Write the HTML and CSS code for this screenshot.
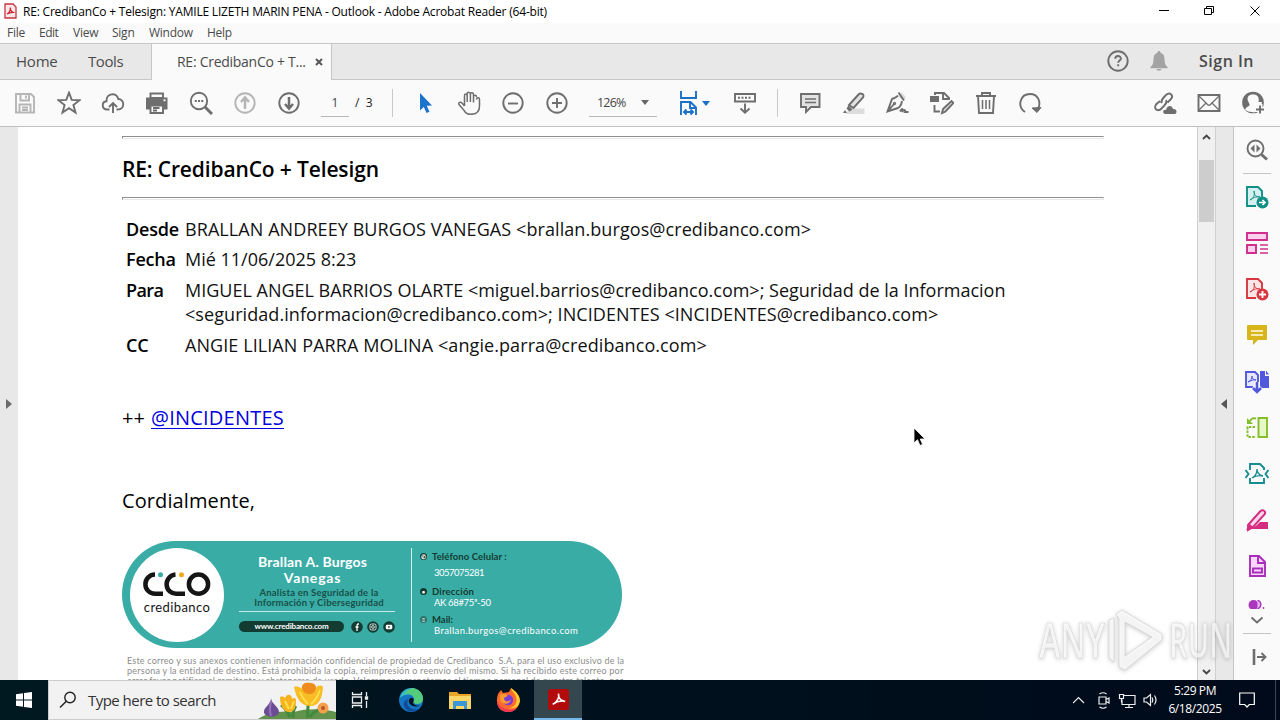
FILE: index.html
```html
<!DOCTYPE html>
<html lang="en">
<head>
    <meta charset="UTF-8">
    <title>RE: CredibanCo + Telesign - Adobe Acrobat Reader</title>
    <link rel="stylesheet" href="styles.css">
</head>
<body>
<div class="screen">

    <header class="titlebar">
        <svg class="app-icon" width="13" height="16" viewBox="0 0 13 16"><path d="M1 1h8l3 3v11H1z" fill="#fde9e9" stroke="#c8353f" stroke-width="1.3"/><path d="M3 11c2-1 3.500-4 3.300-6.500C6.500 8 8 9.500 10.500 9.500 7.500 9 5 9.800 3 11z" fill="none" stroke="#c8252f" stroke-width="1.200"/></svg>
        <span class="title-text">RE: CredibanCo + Telesign: YAMILE LIZETH MARIN PENA - Outlook - Adobe Acrobat Reader (64-bit)</span>
        <svg class="win-buttons" width="110" height="20" viewBox="0 0 110 20"><path d="M5 8.500h10M50.500 6.500h7v6h-7zM52.500 6.500v-2h7v6h-2M96.500 4.500l9 9M105.500 4.500l-9 9"/></svg>
    </header>

    <nav class="menubar">
        <span class="m-file">File</span>
        <span class="m-edit">Edit</span>
        <span class="m-view">View</span>
        <span class="m-sign">Sign</span>
        <span class="m-window">Window</span>
        <span class="m-help">Help</span>
    </nav>

    <div class="tabs">
        <div class="tab-home"><span>Home</span></div>
        <div class="tab-tools"><span>Tools</span></div>
        <div class="tab-doc"><span>RE: CredibanCo + T...</span>
            <svg width="8" height="8" viewBox="0 0 8 8"><path d="M1 1l6 6M7 1L1 7" stroke="#555" stroke-width="1.900"/></svg>
        </div>
        <div class="tab-right">
            <svg class="ic" width="24" height="24" viewBox="0 0 24 24"><circle cx="12" cy="12" r="9.700"/><path d="M9.300 9.800c0-3.600 5.600-3.600 5.600-.3 0 2-2.700 2-2.700 4.300M12.200 15.300v2"/></svg>
            <svg class="bell" width="18" height="20" viewBox="0 0 18 20"><path d="M9 0c1 0 1.500.7 1.500 1.700C13.500 2.500 14.500 5 14.500 8c0 4.500 1 6.500 3 8v1.300H.5V16c2-1.500 3-3.500 3-8 0-3 1-5.500 4-6.300C7.500.7 8 0 9 0zM6.500 18h5c-.3 2.300-4.700 2.300-5 0z"/></svg>
            <span class="signin">Sign In</span>
        </div>
    </div>

    <div class="toolbar">
        <div class="btn"><svg class="ic pale" width="24" height="24" viewBox="0 0 24 24"><path d="M3 3h15l3 3v15.500H3zM7.500 3v6.500h8.500V3M13 4.500v3M6.500 21v-7.500h11V21M9 16.500h6M9 19h6"/></svg></div>
        <div class="btn"><svg class="ic" width="24" height="24" viewBox="0 0 24 24"><path d="M12 1.700l2.700 7.200 7.800.3-6.100 4.800 2.100 7.500-6.500-4.300-6.500 4.300 2.100-7.500L1.500 9.200l7.800-.3z"/></svg></div>
        <div class="btn"><svg class="ic" width="24" height="24" viewBox="0 0 24 24"><path d="M8.500 18.500H6.300c-5.800 0-6-7.600-.8-8.200C5 2 15.500.8 17.300 8c6.500 0 6.800 10.500-.5 10.500h-1.300M12 22v-9.500M8 16l4-4 4 4"/></svg></div>
        <div class="btn"><svg class="ic" width="24" height="24" viewBox="0 0 24 24"><path d="M5.500 2.500h12.500V7H5.500z"/><path d="M1 6.500h21.500v12h-4v-3H5v3H1z" fill="#6e6e6e" stroke="none"/><path d="M5.500 14.500H18V22H5.500zM8 17h6.500M8 19.500h4" fill="#fafafa"/><path d="M18.500 9.300h2" stroke="#fafafa"/></svg></div>
        <div class="btn"><svg class="ic" width="24" height="24" viewBox="0 0 24 24"><circle cx="10" cy="10" r="8.200"/><path d="M16 16l7 7" stroke-width="3"/><path d="M5.800 10h2M9 10h2M12.200 10h2" stroke-width="2.200"/></svg></div>
        <div class="btn"><svg class="ic pale" width="24" height="24" viewBox="0 0 24 24"><circle cx="12" cy="12" r="9.700"/><path d="M12 18V8M8 11l4-4.500 4 4.500" stroke-width="2.500"/></svg></div>
        <div class="btn"><svg class="ic" width="24" height="24" viewBox="0 0 24 24"><circle cx="12" cy="12" r="9.700"/><path d="M12 6v10M8 13l4 4.500 4-4.500" stroke-width="2.500"/></svg></div>
        <div class="page-box"><span class="page-no">1</span><span class="page-total">/&nbsp; 3</span></div>
        <div class="sep"></div>
        <div class="btn pointer"><svg width="16" height="22" viewBox="0 0 16 22"><path d="M3 1l12 12.500-5.200.3 2.700 6-3 1.200-2.700-6L3 18.500z" fill="#1c74cc"/></svg></div>
        <div class="btn"><svg class="ic thin" width="24" height="24" viewBox="0 0 24 24"><path d="M7.500 15V4.800c0-2.300 2.700-2.300 2.700 0V11M10.200 11V3c0-2.400 3.200-2.400 3.200 0v8M13.400 11V3.500c0-2.300 3.100-2.300 3.100 0V11.500M16.500 11.500V6c0-2.300 3-2.300 3 0M19.500 8.500c0-2.300 3-2.300 3 0V15c0 5-3 8.300-8.500 8.300-4 0-5.500-1-7-4L2 13.500c-1-2.300 1.500-3 3-1.500l2.500 3"/></svg></div>
        <div class="btn"><svg class="ic" width="24" height="24" viewBox="0 0 24 24"><circle cx="12" cy="12" r="9.700"/><path d="M7 12.500h10"/></svg></div>
        <div class="btn"><svg class="ic" width="24" height="24" viewBox="0 0 24 24"><circle cx="12" cy="12" r="9.700"/><path d="M7 12h10M12 7v10"/></svg></div>
        <div class="zoom-box"><span class="zoom-val">126%</span><i class="caret"></i></div>
        <div class="fit"><svg class="ic blue" width="20" height="26" viewBox="0 0 20 26"><path d="M3 1v7h15V1M3 25V12h9.500l5.500 5.500V25M12 12v6h6M6 22h9M8.500 19.500L6 22l2.500 2.500M12.500 19.500L15 22l-2.500 2.500"/></svg><i class="caret blue"></i></div>
        <div class="btn"><svg class="ic" width="24" height="24" viewBox="0 0 24 24"><path d="M2 3h20v7.500H2z"/><path d="M5 6.800h14" stroke-dasharray="2 1.500"/><path d="M12 12.500v9M7.500 17.500l4.500 4.300 4.500-4.300"/></svg></div>
        <div class="sep second"></div>
        <div class="btn"><svg class="ic" width="24" height="24" viewBox="0 0 24 24"><path d="M3 3h18.500v13H13l-5 5v-5H3z" fill="#e2e2e2"/><path d="M7 8h11M7 11.500h11" stroke-width="1.500"/></svg></div>
        <div class="btn"><svg class="ic" width="24" height="24" viewBox="0 0 24 24"><path d="M7 17.500h15.500V23H4z" fill="#dcdcdc" stroke="none"/><path d="M7 14L16.500 3.500c2-2 6.500-.5 4.500 3L11.500 17z" fill="#e2e2e2"/><path d="M6.500 14.500l4 4-3 2-3-3zM3 19l2 3H1z" fill="#6e6e6e" stroke="none"/></svg></div>
        <div class="btn"><svg class="ic" width="24" height="24" viewBox="0 0 24 24"><path d="M15 1l5 5-3 4-4-4z" fill="#ddd" stroke="none"/><path d="M12.500 1.500l5.500 8M12 4.500c-1 1.500-3 2.500-6 3.500L1.500 20.500 12 17c2-1 3.500-4 4-7M2 20l6-7M14 20.500c3-5 3-1 2 .5 3-4 3.500-1 3 0h3.500" stroke-width="1.900"/><circle cx="8.500" cy="12.500" r="1" stroke-width="1.300"/></svg></div>
        <div class="btn"><svg class="ic" width="24" height="24" viewBox="0 0 24 24"><path d="M5 4V2h9l5 5v2M13 2v6h6M4.500 14v6.500H10"/><path d="M0 5h9v6H0z" fill="#6e6e6e" stroke="none"/><path d="M12 22l1-4 8.500-8 2 2-8 8.500z" fill="#ddd"/></svg></div>
        <div class="btn"><svg class="ic" width="24" height="24" viewBox="0 0 24 24"><path d="M2 5h20M8 5V2h8v3M4 5l1 17h14l1-17"/><path d="M8.500 9v9M12 9v9M15.500 9v9" stroke-width="1.500"/></svg></div>
        <div class="btn"><svg class="ic" width="24" height="24" viewBox="0 0 24 24"><path d="M7 21C-1.500 15 2.500 3 12 3c8 0 11.500 8 8 15"/><path d="M14 17l9-.5-4 5z" fill="#6e6e6e" stroke-width="1"/></svg></div>
        <div class="toolbar-right">
            <div class="btn"><svg class="ic" width="26" height="24" viewBox="0 0 26 24"><path d="M10 12c-1.500-2 0-4 4-8 4-3.500 8 .5 5 4l-3.500 3.500M14 9c1.500 2 0 4-4 8-4 4.500-9 1-6-3.500L8 10"/><path d="M13 23c-3-1-2-5 1-4 1-5 6-5 7-1 4-1 5 5 1 5z" fill="#6e6e6e" stroke="none"/></svg></div>
            <div class="btn"><svg class="ic" width="24" height="24" viewBox="0 0 24 24"><path d="M1.500 4h21v16h-21z"/><path d="M2 5l8.500 8.500c1 1 2 1 3 0L22 5M2 19l7-7M22 19l-7-7" stroke-width="1.300"/></svg></div>
            <div class="btn"><svg class="ic" width="24" height="24" viewBox="0 0 24 24"><circle cx="12" cy="11.500" r="9.900"/><path d="M4 18.500c1-2.800 5-2.300 5-4.500 0-1.500-2-2.500-2.300-4.500C6 5.500 8.500 3.500 12 3.500s6 2 5.300 6C17 11.500 15 12.500 15 14l-1 7.500-7-1z" fill="#fafafa" stroke="none"/><path d="M2.300 10c0-5 4-8.500 9.700-8.500 3 0 6 1 7.500 3.500 1.500 2 2 4 2 6h-4c1-5-1-7.500-5.500-7.500S5.700 6 7 10c1 2.500 2 3 1.500 4.500L4 17.500c-1.500-2-1.700-4.500-1.700-7.500z" fill="#6e6e6e" stroke="none"/><path d="M19 13v10.500M14 18.500h10" stroke="#fafafa" stroke-width="5"/><path d="M19 14.500v8M15 18.500h8"/></svg></div>
        </div>
    </div>

    <main class="main">
        <div class="left-rail"><i></i></div>

        <article class="doc">
            <div class="rule"></div>
            <h1><span>RE: CredibanCo + Telesign</span></h1>
            <div class="rule"></div>
            <div class="mail-head">
                <b class="k1">Desde</b><p class="v1">BRALLAN ANDREEY BURGOS VANEGAS &lt;brallan.burgos@credibanco.com&gt;</p>
                <b class="k2">Fecha</b><p class="v2">Mié 11/06/2025 8:23</p>
                <b class="k3">Para</b><p class="v3"><span class="v3a">MIGUEL ANGEL BARRIOS OLARTE &lt;miguel.barrios@credibanco.com&gt;; Seguridad de la Informacion</span><br><span class="v3b">&lt;seguridad.informacion@credibanco.com&gt;; INCIDENTES &lt;INCIDENTES@credibanco.com&gt;</span></p>
                <b class="k4">CC</b><p class="v4">ANGIE LILIAN PARRA MOLINA &lt;angie.parra@credibanco.com&gt;</p>
            </div>
            <p class="mention"><span class="plus">++</span><a href="#">@INCIDENTES</a></p>
            <p class="closing">Cordialmente,</p>

            <section class="card">
                <div class="card-logo">
                    <svg width="70" height="30" viewBox="0 0 70 30" fill="none" stroke="#151515" stroke-width="4.500"><path d="M13 4.600A9.600 9.600 0 0 0 13 23.800h8M33.500 4.600a9.600 9.600 0 0 0 1.500 19.200h8"/><circle cx="56.500" cy="14.200" r="9.600"/><circle cx="18.500" cy="4.700" r="2.500" fill="#3aaca6" stroke="none"/><circle cx="39.500" cy="4.700" r="2.500" fill="#f2a81d" stroke="none"/></svg>
                    <span class="brand">credibanco</span>
                </div>
                <div class="card-mid">
                    <span class="n1">Brallan A. Burgos</span>
                    <span class="n2">Vanegas</span>
                    <span class="r1">Analista en Seguridad de la</span>
                    <span class="r2">Información y Ciberseguridad</span>
                    <div class="web-row">
                        <div class="pill"><span class="web">www.credibanco.com</span></div>
                        <svg width="44" height="12" viewBox="0 0 44 12"><g fill="#123c31"><circle cx="6" cy="6" r="5.800"/><circle cx="22" cy="6" r="5.800"/><circle cx="38" cy="6" r="5.800"/></g><path d="M8 3H7C6 3 6 4 6 5v5M4.500 6h3" stroke="#fff" fill="none" stroke-width="1.300"/><rect x="19" y="3" width="6" height="6" rx="1.500" fill="none" stroke="#fff" stroke-width=".8"/><circle cx="22" cy="6" r="1.400" fill="none" stroke="#fff" stroke-width=".8"/><rect x="34.800" y="3.700" width="6.500" height="4.600" rx="1.200" fill="#fff"/><path d="M37.300 4.800v2.400l2-1.200z" fill="#123c31"/></svg>
                    </div>
                </div>
                <div class="card-info">
                    <div class="row lab"><i class="dot">✆</i><span class="c1">Teléfono Celular :</span></div>
                    <div class="row val v-a"><span class="c2">3057075281</span></div>
                    <div class="row lab l-b"><i class="dot">•</i><span class="c3">Dirección</span></div>
                    <div class="row val v-b"><span class="c4">AK 68#75ª-50</span></div>
                    <div class="row lab l-c"><i class="dot soft">≡</i><span class="c5">Mail:</span></div>
                    <div class="row val v-c"><span class="c6">Brallan.burgos@credibanco.com</span></div>
                </div>
            </section>
            <div class="legal">
                <span class="g1">Este correo y sus anexos contienen información confidencial de propiedad de Credibanco&nbsp; S.A. para el uso exclusivo de la</span>
                <span class="g2">persona y la entidad de destino. Está prohibida la copia, reimpresión o reenvío del mismo. Si ha recibido este correo por</span>
                <span class="g3">error favor notificar al remitente y abstenerse de usarlo. Valoramos y respetamos el tiempo personal de nuestro talento, por</span>
            </div>
        </article>

        <div class="scroll">
            <svg width="9" height="6" viewBox="0 0 9 6"><path d="M1 5l3.500-3.500L8 5"/></svg>
            <div class="thumb"></div>
            <svg class="down" width="9" height="6" viewBox="0 0 9 6"><path d="M1 1l3.500 3.500L8 1"/></svg>
        </div>
        <div class="right-rail"><i></i></div>

        <aside class="tools">
            <div class="tool"><svg class="ic" width="24" height="24" viewBox="0 0 24 24"><circle cx="10.500" cy="10.500" r="8"/><path d="M16.500 16.500l5.500 5" stroke-width="3"/><path d="M9.500 6.500v8l-4-4zM11.500 6.500v8l4-4z" fill="#6e6e6e" stroke="none"/></svg></div>
            <div class="line"></div>
            <div class="tool"><svg class="ic teal" width="24" height="24" viewBox="0 0 24 24"><path d="M11 21H2V2h11l4 4v6" fill="#d5f0f0"/><path d="M5 15c4-2 5-5 4-9 0 4 2 6 6 6-4-1-7 1-10 3z" stroke-width="1"/><circle cx="17.500" cy="17.500" r="6" fill="#148f86" stroke="none"/><path d="M14 17.500h6M17.500 15l2.500 2.500-2.500 2.500" stroke="#fff" stroke-width="1.600"/></svg></div>
            <div class="tool"><svg class="ic magenta" width="24" height="24" viewBox="0 0 24 24"><path d="M2 2h20v7H2zM2 14h9v8H2z" fill="#fbd0ec"/><path d="M15 14h8M15 18h8M15 22h8" stroke-width="1.300"/></svg></div>
            <div class="tool"><svg class="ic red" width="24" height="24" viewBox="0 0 24 24"><path d="M11 21H2V2h11l4 4v6" fill="#ffe6e6"/><path d="M5 15c4-2 5-5 4-9 0 4 2 6 6 6-4-1-7 1-10 3z" stroke-width="1"/><circle cx="17.500" cy="17.500" r="6" fill="#d7373f" stroke="none"/><path d="M14 17.500h7M17.500 14v7" stroke="#fff"/></svg></div>
            <div class="tool"><svg width="24" height="24" viewBox="0 0 24 24"><path d="M3 2h18q1 0 1 1v13q0 1-1 1h-8l-5 5v-5H3q-1 0-1-1V3q0-1 1-1z" fill="#d9b51c"/><path d="M6 8h12M6 12h12" stroke="#fffbe5" stroke-width="1.700"/></svg></div>
            <div class="tool"><svg class="ic indigo" width="24" height="24" viewBox="0 0 24 24"><path d="M15 1h5v5h4v12h-9z" fill="#5258dc" stroke="none"/><path d="M21 .5l3 4h-3z" fill="#5258dc" stroke="none"/><path d="M8 17H1V2h9l3 3v10" fill="#e6e7ff"/><path d="M3 12c3-1 4-4 4-6 0 3 2 4 4 4-3-1-5 1-8 2z" stroke-width="1"/><path d="M12 12v11M7 18l5 5 5-5" stroke="#fafafa" stroke-width="5"/><path d="M12 12v10M8 18l4 4 4-4" stroke-width="2.600"/></svg></div>
            <div class="tool"><svg class="ic green" width="24" height="24" viewBox="0 0 24 24"><path d="M13.500 2H22v19h-8.500z" fill="#e6f7c8"/><path d="M10 11H2.500v10H11" stroke-dasharray="2.500 1.200"/><path d="M2 2v6h6z" fill="#84bf2b" stroke="none"/><path d="M5 5c2-3 3-3 6-2.500"/></svg></div>
            <div class="tool"><svg class="ic cyan" width="26" height="24" viewBox="0 0 26 24"><path d="M6 8V2h10l4 4v2M6 16v5h14v-5"/><path d="M1.500 8l3 4-3 4M24.500 8l-3 4 3 4"/><path d="M8 16c4-2 5-5 5-9 0 4 2 6 6 7-4-1-8 0-11 2z" stroke-width="1.300"/></svg></div>
            <div class="tool"><svg class="ic pink" width="24" height="24" viewBox="0 0 24 24"><path d="M3 17L15.500 3c2.500-2 6 .5 4 3.500L8 19l-5 3z" fill="#ffd8eb"/><path d="M12 17l3-3h8v7H6z" fill="#d52b80" stroke="none"/><path d="M1 22l4-6 4 4z" fill="#d52b80" stroke="none"/></svg></div>
            <div class="tool"><svg class="ic purple" width="24" height="24" viewBox="0 0 24 24"><path d="M5 2h9l6 6v14H5z" fill="#fbd6ff"/><path d="M13 2v7h7M8 14.500h9v4H8z"/></svg></div>
            <div class="tool-cut"><svg width="18" height="9" viewBox="0 0 18 9"><circle cx="5.500" cy="5" r="5" fill="#aa35be"/><path d="M9.500 0c4.500 2 4.500 7 0 9" fill="#efb9f5" stroke="#aa35be" stroke-width="1.500"/><circle cx="15.500" cy="8" r=".9" fill="#aa35be"/></svg></div>
            <svg class="ic more" width="14" height="8" viewBox="0 0 14 8"><path d="M1.500 1.500L7 6.500l5.500-5"/></svg>
            <div class="line"></div>
            <div class="collapse"><svg class="ic" width="18" height="16" viewBox="0 0 18 16"><path d="M5 0v16" stroke-width="2.600"/><path d="M8 8h8M12.500 4l4 4-4 4"/></svg></div>
        </aside>
    </main>

    <footer class="taskbar">
        <div class="start"><svg width="16" height="16" viewBox="0 0 16 16"><path d="M0 2.200l7-1v6.300H0zM8 1l8-1v7.500H8zM0 8.500h7v6.300l-7-1zM8 8.500h8V16l-8-1z" fill="#fff"/></svg></div>
        <div class="search">
            <svg width="18" height="18" viewBox="0 0 18 18"><circle cx="11" cy="6.500" r="5.200" fill="none" stroke="#222" stroke-width="1.400"/><path d="M7.300 10.300L1 16.500" stroke="#222" stroke-width="1.500"/></svg>
            <span class="search-text">Type here to search</span>
            <svg class="flowers" width="80" height="38" viewBox="0 0 80 38"><path d="M2 38c8-6 22-9 36-7 14-4 30-3 42 0v7z" fill="#62934c"/><path d="M34 36c-4-8-6-10-9-12M37 37c0-8 1-10 3-12M52 37c-1-8 0-16 4-22M54 36c4-6 8-7 12-8" stroke="#3f8a3c" stroke-width="3" fill="none"/><path d="M15 17c0 6 9 9 8 15-3 5-12 5-15 0-1-6 7-8 7-15z" fill="#6c4c94"/><path d="M15 20c-1 5-2 9 0 15" stroke="#9474b4" stroke-width="2" fill="none"/><path d="M24 16c3-1 4 0 5 1 1-3 3-4 5-3 2 1 2 3 2 4 2-2 4-1 4 1 0 7-1 12-7 12-6 0-9-7-9-15z" fill="#f6b31f"/><path d="M38 6c3-1 6 0 8 2-1-4 2-6 5-6 4-1 8 1 9 5 2-3 5-3 7-1-1 12-4 19-13 19-9 0-14-8-16-19z" fill="#f8bc24"/><path d="M46 6c1-4 4-5 7-4 4 0 7 1 7 5-1 4-3 6-7 6-4 0-7-3-7-7z" fill="#ee8b1d"/><path d="M44 11c2 6 5 9 8 12M64 9c-2 6-4 10-9 14M29 20l4 8M38 20l-3 8" stroke="#ffe04a" stroke-width="2" fill="none"/><circle cx="67" cy="27" r="5.500" fill="#f5a04c"/><circle cx="67" cy="27" r="2" fill="#b5552a"/></svg>
        </div>
        <div class="task"><svg width="18" height="18" viewBox="0 0 18 18" fill="none" stroke="#eee" stroke-width="1.300"><path d="M1.500 1v2.500h9V1M1.500 6h9v6h-9zM1.500 17v-2.500h9V17M15.500 1v4M15.500 10v7"/><path d="M14.500 6h2v2h-2z" fill="#eee"/></svg></div>
        <div class="task edge"><svg width="24" height="24" viewBox="0 0 24 24"><circle cx="12" cy="12" r="12" fill="#1577c4"/><path d="M1 10C3-2 20-3 23.500 8c1.500 6-4 9-8.500 7-2-1 1-2 0-5-2-5-10-4-14 0z" fill="#37bfc0"/><path d="M13 0c6 0 11 5 11 11 0 5-6 6-9 4-1-1 1-2 0-5C14 6 9 5 5 6 8 3 10 1 13 0z" fill="#55cc7c"/><path d="M9 11c-3 8 5 13 12 9-5 6-14 4-16-2-1-4 1-6 4-7z" fill="#114b98"/><path d="M14.500 10.500c-3-2-6 1-4 5 2 3 7 4 11 2-3 1-9-1-7-4z" fill="#07131f"/></svg></div>
        <div class="task folder"><svg width="22" height="19" viewBox="0 0 22 19"><path d="M0 1h8l2 2h12v15H0z" fill="#e8a628"/><path d="M0 5h22v13H0z" fill="#fcd667"/><path d="M4 10h14v8h-3v-3H7v3H4z" fill="#3c98d4"/></svg></div>
        <div class="task fox"><svg width="24" height="24" viewBox="0 0 24 24"><path d="M2 6l3-4 2 3 6-1 2-4 4 5 3 3c4 9-2 16-10 16C2 24-1 15 2 6z" fill="#ff6a2c"/><path d="M15 0c0 3 4 5 5 9 2 7-3 12-9 11 8 1 12-1 13-7 0-5-3-9-9-13z" fill="#ffca2f"/><path d="M1 12c0 8 6 12 12 12 3 0 5-1 7-3-8 2-17 0-19-9z" fill="#f23459"/><circle cx="12" cy="12" r="5.200" fill="#7a3ed8"/><path d="M4 7c3-2 6-1 8 1-2 1-4 1-4 3 1 3 4 3 7 1-2 5-10 5-11-1z" fill="#ff9c2b"/></svg></div>
        <div class="task active"><svg width="21" height="21" viewBox="0 0 22 22"><rect width="22" height="22" rx="3" fill="#b30b0b"/><path d="M5 16c5-3 7-6 6-11 0 6 3 7 7 8-5-1-9 0-13 3z" fill="none" stroke="#fff" stroke-width="1.600"/></svg></div>
        <div class="tray">
            <svg width="86" height="20" viewBox="0 0 86 20" fill="none" stroke="#eee" stroke-width="1.200"><path d="M0 13l5.500-5.500L11 13M26 7h7v7h-7zM33 9.500l3-1.500v5l-3-1.500M26.500 4q3.500-2.500 7 0M26.500 17q3.500 2.500 7 0M51 5.500h11v9H49v-5M56 14.500v3M52 17.500h8M46.500 4.500h4v4h-4zM48.500 8.500v4M71 8v4h2.500l4 3.500v-11L73.500 8zM79 7.500q1.500 2.500 0 5M81.500 5.500q3 4.500 0 9"/></svg>
            <div class="clock"><span class="time">5:29 PM</span><span class="date">6/18/2025</span></div>
            <svg class="note" width="16" height="16" viewBox="0 0 16 16" fill="none" stroke="#fff" stroke-width="1.200"><path d="M.7 1h14.600v11.500h-5L8 15l-2.300-2.500h-5z"/></svg>
            <div class="peek"></div>
        </div>
    </footer>

    <svg class="cursor" width="13" height="20" viewBox="0 0 13 20"><path d="M1 1v15l3.500-3.300L7 18.500l2.600-1.200L7.200 12H12z" fill="#000" stroke="#fff" stroke-width=".8"/></svg>

    <svg class="watermark" width="200" height="72" viewBox="0 0 200 72">
        <g class="wm-text"><text x="3" y="54" textLength="66" lengthAdjust="spacingAndGlyphs">ANY</text><text x="133" y="54" textLength="63" lengthAdjust="spacingAndGlyphs">RUN</text></g>
        <g class="wm-mark"><path d="M73 16l5-2v44l-5-4zM80 10l6-4 40 24v6L89 66l-6-3V15zM89 18v34l27-19z"/></g>
    </svg>
</div>
</body>
</html>
```
FILE: styles.css
```css
* {
    box-sizing: border-box;
}
body {
    margin: 0;
    font-family: "Open Sans", "Noto Sans", sans-serif;
    background: #fff;
}
p, h1 {
    margin: 0;
}
svg {
    display: block;
    flex: none;
}
.screen {
    position: relative;
    width: 1280px;
    height: 720px;
    overflow: hidden;
    display: flex;
    flex-direction: column;
    white-space: nowrap;
}
.ic {
    --c: #6e6e6e;
    fill: none;
    stroke: var(--c);
    stroke-width: 1.9;
}
.ic.pale { --c: #b5b5b5; }
.ic.thin { stroke-width: 1.5; }
.ic.blue { --c: #1c70c8; }
.ic.teal { --c: #148f86; }
.ic.magenta { --c: #cf2e8d; }
.ic.red { --c: #d7373f; }
.ic.indigo { --c: #5258dc; }
.ic.green { --c: #84bf2b; }
.ic.cyan { --c: #168b91; }
.ic.pink { --c: #d52b80; }
.ic.purple { --c: #a72fb9; }

/* window title and menus */
.titlebar {
    height: 23px;
    display: flex;
    align-items: center;
    padding-left: 4px;
    font-size: 12px;
    color: #000;
}
.app-icon {
    margin-bottom: 2px;
}
.title-text {
    margin-left: 6px;
    letter-spacing: -0.2px;
}
.win-buttons {
    margin-left: auto;
    margin-right: 16px;
    fill: none;
    stroke: #000;
}
.menubar {
    height: 20px;
    background: #fafafa;
    display: flex;
    align-items: center;
    padding: 0 0 1px 7px;
    font-size: 12px;
    letter-spacing: -0.25px;
    color: #4a4a4a;
}
.m-file { width: 32px; }
.m-edit { width: 34px; letter-spacing: -0.5px; }
.m-view { width: 39px; }
.m-sign { width: 37px; }
.m-window { width: 58px; }

.tabs {
    height: 37px;
    background: #e8e8e8;
    border-top: 1px solid #c6c6c6;
    border-bottom: 1px solid #c6c6c6;
    display: flex;
    align-items: center;
    font-size: 15px;
    color: #4b4b4b;
}
.tab-home {
    width: 88px;
    padding: 0 0 2px 16px;
    letter-spacing: -0.2px;
}
.tab-tools {
    width: 63px;
    padding-bottom: 2px;
    letter-spacing: -0.4px;
}
.tab-doc {
    width: 181px;
    height: 36px;
    align-self: flex-start;
    background: #fafafa;
    border-left: 1px solid #c6c6c6;
    border-right: 1px solid #c6c6c6;
    display: flex;
    align-items: center;
    justify-content: space-between;
    padding: 0 8px 1px 25px;
    font-size: 14px;
    letter-spacing: -0.27px;
}
.tab-right {
    margin-left: auto;
    display: flex;
    align-items: center;
    padding: 0 26px 2px 0;
}
.bell {
    fill: #a3a3a3;
    margin: 0 31px 0 20px;
}
.signin {
    font-size: 16px;
    font-weight: 600;
    letter-spacing: 0.5px;
}

/* toolbar */
.toolbar {
    height: 47px;
    background: #fafafa;
    border-bottom: 1px solid #c0c0c0;
    display: flex;
    align-items: center;
    padding-left: 3px;
    font-size: 13px;
    color: #444;
}
.btn {
    width: 44px;
    flex: none;
    display: flex;
    justify-content: center;
}
.page-box {
    width: 81px;
    height: 27px;
    padding-left: 10px;
    display: flex;
    font-size: 12px;
    line-height: 25px;
}
.page-no {
    width: 28px;
    border-bottom: 1px solid #b8b8b8;
    text-align: center;
}
.page-total {
    padding-left: 6px;
    color: #222;
}
.sep {
    width: 1px;
    height: 28px;
    background: #c8c8c8;
    margin-right: 10px;
}
.zoom-box {
    width: 68px;
    height: 27px;
    margin: 0 20px 0 10px;
    padding: 0 8px;
    border-bottom: 1px solid #b8b8b8;
    display: flex;
    align-items: center;
    justify-content: space-between;
}
.zoom-val {
    font-size: 12.5px;
    letter-spacing: -0.8px;
}
.caret {
    border: 4px solid transparent;
    border-top: 5px solid #666;
    border-bottom: 0;
}
.caret.blue {
    border-top-color: #1c70c8;
}
.fit {
    width: 45px;
    margin-left: 1px;
    display: flex;
    align-items: center;
    gap: 4px;
}
.sep.second {
    margin-left: 10px;
}
.toolbar-right {
    margin-left: auto;
    display: flex;
    padding-right: 5px;
}

/* document area */
.main {
    height: 553px;
    display: flex;
    overflow: hidden;
}
.left-rail {
    width: 18px;
    background: #e8e8e8;
    display: flex;
    align-items: center;
    padding-left: 6px;
}
.left-rail i {
    border: 5px solid transparent;
    border-left: 6px solid #6a6a6a;
    border-right: 0;
}
.doc {
    width: 1179px;
    padding: 9px 0 0 104px;
    overflow: hidden;
    color: #000;
}
.rule {
    width: 982px;
    height: 3px;
    border: 1px solid #8f8f8f;
    border-right-color: #e8e8e8;
    border-bottom-color: #e8e8e8;
}
h1 {
    height: 58px;
    line-height: 60px;
    font-size: 21px;
    font-weight: 600;
    letter-spacing: -0.14px;
}
.mail-head {
    display: grid;
    grid-template-columns: 59px auto;
    row-gap: 6px;
    padding: 17px 0 0 4px;
    font-size: 18px;
    line-height: 24.4px;
    color: #111;
}
.mail-head b {
    font-weight: 600;
    letter-spacing: -0.2px;
    color: #000;
}
.mail-head .k3 {
    letter-spacing: -0.6px;
}
.v1, .v4 {
    letter-spacing: 0.08px;
}
.v3b {
    letter-spacing: 0.07px;
}
.mention {
    margin-top: 46px;
    font-size: 20px;
    line-height: 30px;
    display: flex;
}
.plus {
    width: 29px;
}
.mention a {
    color: #0000e0;
    letter-spacing: 0.22px;
    text-underline-offset: 3px;
    text-decoration-thickness: 1px;
}
.closing {
    margin-top: 53px;
    font-size: 20px;
    line-height: 30px;
    letter-spacing: 0.1px;
}

/* signature card */
.card {
    width: 500px;
    height: 107px;
    margin-top: 25px;
    border-radius: 54px;
    background: #3aaca6;
    display: flex;
    align-items: center;
    padding-left: 8px;
    font-family: Lato, sans-serif;
    color: #fff;
}
.card-logo {
    width: 94px;
    height: 94px;
    border-radius: 50%;
    background: #fff;
    display: flex;
    flex-direction: column;
    align-items: center;
    padding-top: 22px;
}
.brand {
    font-size: 13px;
    line-height: 15px;
    letter-spacing: 0.4px;
    color: #151515;
}
.card-mid {
    width: 156px;
    height: 100px;
    margin: 0 16px 0 15px;
    display: flex;
    flex-direction: column;
    align-items: center;
    padding-top: 9px;
}
.n1, .n2 {
    padding-right: 9px;
    font-size: 14px;
    line-height: 16px;
    font-weight: 700;
    letter-spacing: 0.17px;
}
.n2 {
    letter-spacing: 0.8px;
}
.r1, .r2 {
    padding-left: 4px;
    font-size: 9.5px;
    line-height: 10.5px;
    font-weight: 700;
    letter-spacing: 0.2px;
    color: #175047;
}
.r1 {
    margin-top: 2px;
}
.web-row {
    width: 156px;
    border-top: 1px solid #c9ebe8;
    margin-top: 2px;
    padding-top: 9px;
    display: flex;
    justify-content: space-between;
    align-items: center;
}
.pill {
    width: 105px;
    height: 11px;
    border-radius: 6px;
    background: #123c31;
    font-size: 8px;
    line-height: 10px;
    font-weight: 700;
    letter-spacing: -0.17px;
    text-align: center;
}
.card-info {
    height: 94px;
    border-left: 1px solid #d5f0ee;
    padding-left: 8px;
    font-size: 9.5px;
}
.row {
    display: flex;
    align-items: center;
    height: 11px;
    line-height: 11px;
}
.lab {
    font-weight: 700;
    color: #123c31;
    height: 18px;
}
.val {
    padding-left: 14px;
}
.c1 { letter-spacing: 0.1px; }
.c2 { letter-spacing: -0.5px; }
.c3 { letter-spacing: 0.2px; }
.c4 { letter-spacing: -0.35px; }
.c6 { letter-spacing: 0.4px; }
.dot {
    width: 7px;
    height: 7px;
    border-radius: 50%;
    background: #123c31;
    color: #fff;
    font-size: 6px;
    line-height: 7px;
    text-align: center;
    font-style: normal;
    margin-right: 5px;
}
.dot.soft {
    background: #2e7169;
}
.v-a { margin-top: 1px; }
.l-b { margin-top: 4.5px; }
.v-b { margin-top: -3.5px; }
.l-c { margin-top: 3px; }
.v-c { margin-top: -4px; }
.legal {
    margin: 8px 0 0 5px;
    display: flex;
    flex-direction: column;
    font-family: Lato, sans-serif;
    font-size: 9px;
    line-height: 10px;
    color: #8c8c8c;
}
.g1 { letter-spacing: 0.19px; }
.g2 { letter-spacing: 0.24px; }
.g3 { letter-spacing: 0.1px; }

.scroll {
    width: 19px;
    border-left: 1px solid #cfcfcf;
    border-right: 1px solid #cfcfcf;
    background: #f0f0f0;
    display: flex;
    flex-direction: column;
    align-items: center;
    padding: 7px 0 5px;
}
.scroll svg {
    fill: none;
    stroke: #444;
    stroke-width: 1.8;
}
.thumb {
    width: 15px;
    height: 62px;
    margin-top: 20px;
    background: #cdcdcd;
}
.scroll .down {
    margin-top: auto;
}
.right-rail {
    width: 18px;
    background: #e8e8e8;
    border-right: 1px solid #c6c6c6;
    display: flex;
    align-items: center;
    padding-left: 5px;
}
.right-rail i {
    border: 5px solid transparent;
    border-right: 6px solid #555;
    border-left: 0;
}
.tools {
    flex: 1;
    background: #fafafa;
    display: flex;
    flex-direction: column;
    align-items: center;
}
.tool {
    height: 46.1px;
    flex: none;
    display: flex;
    align-items: center;
}
.tools .line {
    width: 28px;
    height: 1px;
    flex: none;
    background: #c4c4c4;
}
.tool-cut {
    height: 20px;
    padding-top: 11px;
}
.more {
    margin: 7px 0 9px;
}
.collapse {
    margin: 15px 0 0 2px;
}

/* taskbar */
.taskbar {
    height: 40px;
    background: linear-gradient(90deg, #001820, #000a1a);
    display: flex;
    color: #fff;
}
.start {
    width: 48px;
    display: flex;
    align-items: center;
    justify-content: center;
}
.search {
    width: 288px;
    background: #f2f2f2;
    border: 1px solid #ccc;
    border-right: 0;
    display: flex;
    align-items: center;
    padding-left: 10px;
    font-size: 15px;
    color: #333;
}
.search-text {
    margin-left: 11px;
    letter-spacing: -0.53px;
}
.flowers {
    margin-left: auto;
}
.task {
    width: 48px;
    display: flex;
    align-items: center;
    justify-content: center;
}
.edge {
    width: 54px;
}
.folder {
    width: 44px;
}
.fox {
    width: 52px;
}
.task.active {
    width: 48px;
    background: #34464e;
    border-bottom: 2px solid #76b9ed;
}
.tray {
    margin-left: auto;
    width: 207px;
    display: flex;
    align-items: center;
}
.clock {
    width: 72px;
    display: flex;
    flex-direction: column;
    align-items: center;
    font-size: 12px;
    line-height: 18px;
    letter-spacing: -0.4px;
}
.note {
    margin-left: 8px;
}
.peek {
    width: 1px;
    height: 40px;
    margin-left: 20px;
    background: #3c4656;
}

.cursor {
    position: absolute;
    left: 913px;
    top: 427px;
}
.watermark {
    position: absolute;
    left: 1036px;
    top: 604px;
    filter: drop-shadow(0 1px 2px rgba(0, 0, 0, 0.25));
}
.wm-text {
    font: 600 49px "Open Sans", sans-serif;
    fill: #fff;
    fill-opacity: .7;
    stroke: #d4d4d4;
    stroke-width: .6;
}
.wm-mark {
    fill: #fff;
    fill-opacity: .75;
    fill-rule: evenodd;
    stroke: #d0d0d0;
    stroke-width: .7;
}
```
